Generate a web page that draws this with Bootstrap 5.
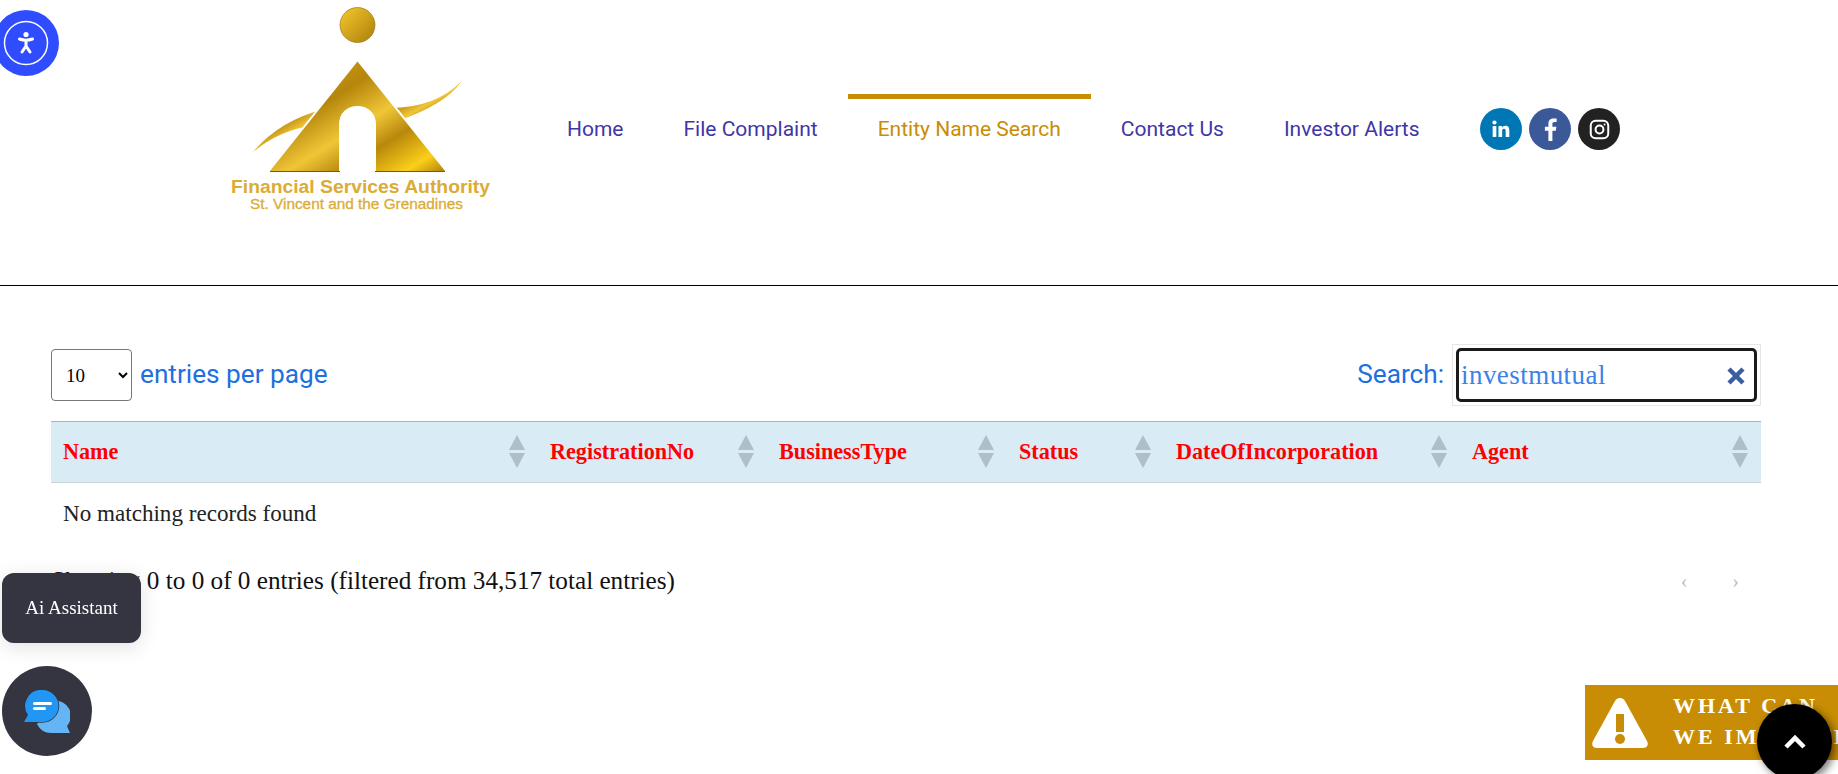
<!DOCTYPE html>
<html lang="en">
<head>
<meta charset="utf-8">
<title>Entity Name Search</title>
<link rel="stylesheet" href="https://cdn.jsdelivr.net/npm/bootstrap@5.3.0/dist/css/bootstrap.min.css">
<style>
body{font-family:"Liberation Serif",serif;background:#fff;color:#212529;overflow:hidden}
.site-head{height:286px;border-bottom:1px solid #000;padding-left:220px}
.logo-svg{display:block;width:280px;height:220px;flex:none}
.main-nav{margin:94px 0 0 37px}
.main-nav .nav-link{font-family:Roboto,sans-serif;font-size:21px;line-height:27px;color:#3f36a8;padding:17px 30px 19px;border-top:5px solid transparent}
.main-nav .nav-link.active{color:#c88d04;border-top-color:#c88d04}
.soc-list{margin:14px 0 0 31px;gap:7px}
.soc-dot{width:42px;height:42px;border-radius:50%}
.soc-li{background:#0077b5}.soc-fb{background:#3b5998}.soc-ig{background:#222}
.page-body{margin-left:51px;width:1710px;padding-top:57px}
.tbl-top{height:64px;margin-bottom:14px}
.len-sel{width:81px;height:52px;border-color:#777;color:#000;font-family:"Liberation Serif",serif;font-size:19px;padding:6px 10px;border-radius:4px;appearance:auto;background-image:none}
.blue-lab{font-family:Roboto,sans-serif;font-size:26.2px;color:#1e6fe0}
.search-shell{width:309px;height:62px;border:1px solid #e6e6e6;padding:3px;margin-left:8px}
.search-in{height:100%;border:3px solid #1a1a1a;border-radius:5px;font-family:"Liberation Serif",serif;font-size:27px;letter-spacing:.45px;color:#3b82e8;padding:0 40px 0 2px}
.search-x{right:14px;top:21px;width:20px;height:20px}
.res-table{table-layout:fixed;width:1710px;margin:0}
.res-table col.c1{width:487px}.res-table col.c2{width:229px}.res-table col.c3{width:240px}.res-table col.c4{width:157px}.res-table col.c5{width:296px}.res-table col.c6{width:301px}
.res-table th{background:#d9ebf5;color:#f00;font-size:22.2px;font-weight:700;height:61px;padding:0 13px 0 12px;border-top:1px solid #a9b4b9;border-bottom:1px solid #ccd3d8;vertical-align:middle}
.res-table td{font-size:23.1px;padding:13px 12px 16px;border:0;color:#222}
.sort-ico{width:16px;height:33px;flex:none}
.foot-line{font-size:25.2px;color:#111;margin-top:15px}
.pg-arrows{gap:45px;padding-right:22px;color:#bbb;font-size:20px}
.float-a11y{position:fixed;left:-7px;top:10px;width:66px;height:66px;border-radius:50%;background:#2f4dff}
.float-ai{position:fixed;left:2px;top:573px;width:139px;height:70px;border-radius:12px;background:#353441;color:#fff;font-size:19px;box-shadow:0 4px 20px rgba(0,0,0,.12)}
.float-chat{position:fixed;left:2px;top:666px;width:90px;height:90px;border-radius:50%;background:#353441}
.float-fb{position:fixed;left:1585px;top:685px;width:253px;height:75px;background:#c88d04;color:#fff;font-size:22px;line-height:31px;letter-spacing:3px;padding-left:88px;font-weight:700;white-space:nowrap;overflow:hidden}
.fb-warn{position:absolute;left:6px;top:11px;width:58px;height:54px}
.fb-lines{padding-top:5px}
.float-top{position:fixed;left:1757px;top:704px;width:75px;height:75px;border-radius:50%;background:#000;box-shadow:3px 3px 8px rgba(0,0,0,.55)}
</style>
</head>
<body>
<header class="site-head d-flex align-items-start">
  <svg class="logo-svg" viewBox="0 0 280 220" role="img" aria-label="Financial Services Authority logo">
    <defs>
      <linearGradient id="gold" x1="0" y1="0" x2="1" y2="1">
        <stop offset="0" stop-color="#e0ad12"/><stop offset=".35" stop-color="#b5860c"/><stop offset=".55" stop-color="#f0c637"/><stop offset=".7" stop-color="#b8880c"/><stop offset=".88" stop-color="#fbcf1a"/><stop offset="1" stop-color="#a87c08"/>
      </linearGradient>
      <linearGradient id="ball" x1="0" y1="0" x2="1" y2="1"><stop offset="0" stop-color="#f7c92e"/><stop offset="1" stop-color="#a97e0a"/></linearGradient>
    </defs>
    <circle cx="137.5" cy="25" r="17.5" fill="url(#ball)" stroke="#8d6b0c" stroke-width=".6"/>
    <path d="M33 152 Q60 120 105 109 L91 126 Q60 130 33 152Z" fill="url(#gold)"/>
    <path d="M170 108 Q215 108 242 81 Q225 105 177 121Z" fill="url(#gold)"/>
    <path d="M137.500 60 L227 172 H155 V125 C155 113 147 107 137.500 107 C128 107 120 113 120 125 V172 H48 Z" fill="url(#gold)" stroke="#fff" stroke-width="2"/>
    <path d="M50 171.500 H120 M155 171.500 H225" stroke="#7a5a08" stroke-width="1"/>
    <text x="11" y="193" font-family="Liberation Sans, sans-serif" font-weight="700" font-size="18" fill="#dbac34" textLength="259" lengthAdjust="spacingAndGlyphs">Financial Services Authority</text>
    <text x="30" y="209" font-family="Liberation Sans, sans-serif" font-size="15" fill="#dbac34" stroke="#dbac34" stroke-width=".3" textLength="213" lengthAdjust="spacingAndGlyphs">St. Vincent and the Grenadines</text>
  </svg>
  <ul class="nav main-nav flex-nowrap">
    <li class="nav-item"><a class="nav-link" href="#">Home</a></li>
    <li class="nav-item"><a class="nav-link" href="#">File Complaint</a></li>
    <li class="nav-item"><a class="nav-link active" href="#">Entity Name Search</a></li>
    <li class="nav-item"><a class="nav-link" href="#">Contact Us</a></li>
    <li class="nav-item"><a class="nav-link" href="#">Investor Alerts</a></li>
    <li class="nav-item d-flex soc-list">
      <a class="soc-dot soc-li d-flex align-items-center justify-content-center" href="#" aria-label="LinkedIn"><svg width="20" height="20" viewBox="0 0 24 24" fill="#fff"><rect x="2" y="8.5" width="4.4" height="13"/><circle cx="4.2" cy="4.2" r="2.5"/><path d="M9 8.5h4.2v1.9c.8-1.3 2.3-2.2 4.2-2.2 3.9 0 4.6 2.6 4.6 5.9v7.4h-4.4v-6.6c0-1.6 0-3.2-2-3.2s-2.2 1.5-2.2 3.1v6.7H9z"/></svg></a>
      <a class="soc-dot soc-fb d-flex align-items-center justify-content-center" href="#" aria-label="Facebook"><svg width="13" height="23" viewBox="0 0 13 23" fill="#fff"><path d="M8.4 23V12.7h3.4l.6-4H8.4V6.1c0-1.2.4-2 2-2h2.2V.6C12.2.5 10.900.4 9.500.4 6.500.4 4.400 2.300 4.400 5.600v3.100H.9v4h3.500V23z"/></svg></a>
      <a class="soc-dot soc-ig d-flex align-items-center justify-content-center" href="#" aria-label="Instagram"><svg width="21" height="21" viewBox="0 0 24 24" fill="none" stroke="#fff" stroke-width="2.300"><rect x="2" y="2" width="20" height="20" rx="5.500"/><circle cx="12" cy="12" r="4.500"/><circle cx="17.800" cy="6.200" r="1.100" fill="#fff" stroke="none"/></svg></a>
    </li>
  </ul>
</header>

<main class="page-body">
  <div class="tbl-top d-flex justify-content-between align-items-center">
    <div class="d-flex align-items-center gap-2">
      <select class="form-select len-sel" aria-label="entries per page"><option>10</option><option>25</option><option>50</option></select>
      <span class="blue-lab">entries per page</span>
    </div>
    <div class="d-flex align-items-center">
      <label class="blue-lab" for="srch">Search:</label>
      <div class="search-shell position-relative">
        <input id="srch" class="form-control search-in" type="text" value="investmutual">
        <svg class="search-x position-absolute" viewBox="0 0 20 20"><path d="M3 3 L17 17 M17 3 L3 17" stroke="#3a5ea0" stroke-width="4.500" fill="none"/></svg>
      </div>
    </div>
  </div>

  <svg width="0" height="0" class="position-absolute"><symbol id="sorter" viewBox="0 0 16 33"><path d="M8 0 L16 15 H0Z M8 33 L16 18 H0Z" fill="#afbfc9"/></symbol></svg>
  <table class="table res-table">
    <colgroup><col class="c1"><col class="c2"><col class="c3"><col class="c4"><col class="c5"><col class="c6"></colgroup>
    <thead><tr>
      <th><div class="d-flex justify-content-between align-items-center">Name<svg class="sort-ico"><use href="#sorter"/></svg></div></th>
      <th><div class="d-flex justify-content-between align-items-center">RegistrationNo<svg class="sort-ico"><use href="#sorter"/></svg></div></th>
      <th><div class="d-flex justify-content-between align-items-center">BusinessType<svg class="sort-ico"><use href="#sorter"/></svg></div></th>
      <th><div class="d-flex justify-content-between align-items-center">Status<svg class="sort-ico"><use href="#sorter"/></svg></div></th>
      <th><div class="d-flex justify-content-between align-items-center">DateOfIncorporation<svg class="sort-ico"><use href="#sorter"/></svg></div></th>
      <th><div class="d-flex justify-content-between align-items-center">Agent<svg class="sort-ico"><use href="#sorter"/></svg></div></th>
    </tr></thead>
    <tbody><tr><td colspan="6">No matching records found</td></tr></tbody>
  </table>

  <div class="d-flex justify-content-between align-items-center foot-line">
    <div>Showing 0 to 0 of 0 entries (filtered from 34,517 total entries)</div>
    <div class="d-flex pg-arrows"><span>‹</span><span>›</span></div>
  </div>
</main>

<button class="float-a11y border-0 p-0 d-flex align-items-center justify-content-center" aria-label="Accessibility">
  <svg width="46" height="46" viewBox="0 0 46 46" fill="none" stroke="#fff"><circle cx="23" cy="23" r="21.500" stroke-width="1.500"/><circle cx="23" cy="14.500" r="2.600" fill="#fff" stroke="none"/><path d="M16.500 19 Q23 21.500 29.500 19 M23 20.500 V26 M23 26 L19 32 M23 26 L27 32" stroke-width="3" stroke-linecap="round"/></svg>
</button>
<div class="float-ai d-flex align-items-center justify-content-center">Ai Assistant</div>
<button class="float-chat border-0 p-0 d-flex align-items-center justify-content-center" aria-label="Chat">
  <svg width="46" height="43" viewBox="0 0 46 43"><path d="M30 11 A15 15 0 0 1 43 36 L46 43 H27 C21 43 16 40 13 34Z" fill="#64b5f6"/><path d="M18.500 0 A16 16 0 0 1 18.500 32 H0 L4 25 A16 16 0 0 1 18.500 0Z" fill="#2196f3" stroke="#353441" stroke-width="1.500" paint-order="stroke"/><rect x="9" y="12" width="19" height="3" rx="1.500" fill="#fff"/><rect x="9" y="17" width="13" height="3" rx="1.500" fill="#fff"/></svg>
</button>
<div class="float-fb">
  <svg class="fb-warn" viewBox="0 0 58 54"><path d="M29 2 C31 2 33 3 34 5 L56 45 C58 49 56 52 52 52 H6 C2 52 0 49 2 45 L24 5 C25 3 27 2 29 2Z" fill="#fff"/><rect x="25" y="18" width="8" height="18" fill="#c88d04"/><circle cx="29" cy="43" r="5" fill="#c88d04"/></svg>
  <div class="fb-lines">WHAT CAN<br>WE IMPROVE</div>
</div>
<button class="float-top border-0 p-0 d-flex align-items-center justify-content-center" aria-label="Back to top">
  <svg width="24" height="16" viewBox="0 0 24 16"><path d="M3 13 L12 4 L21 13" fill="none" stroke="#fff" stroke-width="4.500"/></svg>
</button>
</body>
</html>
